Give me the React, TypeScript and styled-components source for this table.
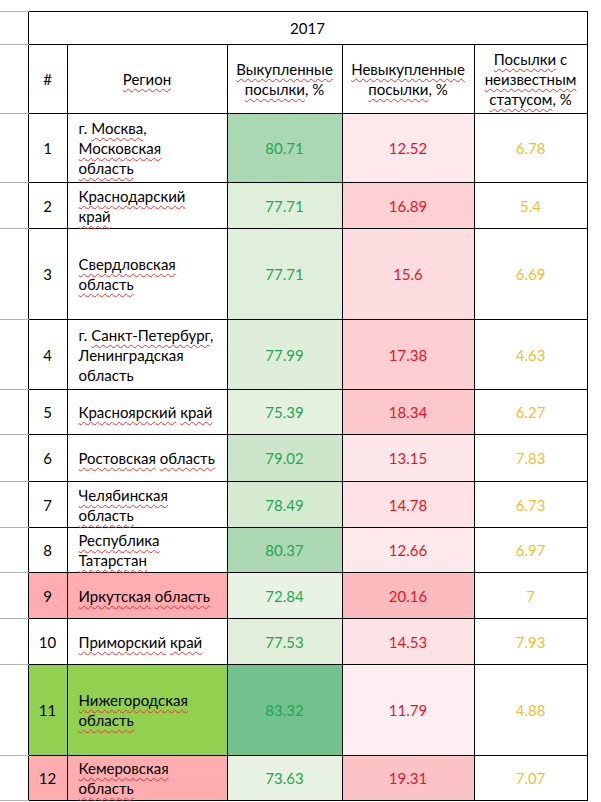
import styled, { createGlobalStyle } from "styled-components";

const GlobalStyle = createGlobalStyle`
  body {
    margin: 0;
    background: #ffffff;
    font-family: Lato, "Open Sans", sans-serif;
  }
`;

type Region = {
  n: number;
  lines: string[];
  plain?: string[];
  h: number;
  bought: number;
  boughtBg: string;
  lost: number;
  lostBg: string;
  unknown: number;
  mark?: string;
};

const rows: Region[] = [
  { n: 1, lines: ["г. Москва,", "Московская", "область"], plain: ["г."], h: 69, bought: 80.71, boughtBg: "#a9d8b2", lost: 12.52, lostBg: "#fde9ec", unknown: 6.78 },
  { n: 2, lines: ["Краснодарский", "край"], h: 46, bought: 77.71, boughtBg: "#e0efda", lost: 16.89, lostBg: "#fdd1d4", unknown: 5.4 },
  { n: 3, lines: ["Свердловская", "область"], h: 91, bought: 77.71, boughtBg: "#e0efda", lost: 15.6, lostBg: "#fddcdf", unknown: 6.69 },
  { n: 4, lines: ["г. Санкт-Петербург,", "Ленинградская", "область"], plain: ["г.", "Ленинградская", "область"], h: 70, bought: 77.99, boughtBg: "#deeed8", lost: 17.38, lostBg: "#fdcfd2", unknown: 4.63 },
  { n: 5, lines: ["Красноярский край"], h: 45, bought: 75.39, boughtBg: "#e5f1df", lost: 18.34, lostBg: "#fdc8cb", unknown: 6.27 },
  { n: 6, lines: ["Ростовская область"], h: 47, bought: 79.02, boughtBg: "#cde6cb", lost: 13.15, lostBg: "#fde7ea", unknown: 7.83 },
  { n: 7, lines: ["Челябинская", "область"], h: 46, bought: 78.49, boughtBg: "#d6eacf", lost: 14.78, lostBg: "#fde1e4", unknown: 6.73 },
  { n: 8, lines: ["Республика", "Татарстан"], h: 45, bought: 80.37, boughtBg: "#acd9b3", lost: 12.66, lostBg: "#fde9ec", unknown: 6.97 },
  { n: 9, lines: ["Иркутская область"], h: 46, bought: 72.84, boughtBg: "#e8f3e4", lost: 20.16, lostBg: "#fcbcbf", unknown: 7, mark: "#ffadb0" },
  { n: 10, lines: ["Приморский край"], h: 46, bought: 77.53, boughtBg: "#e1efda", lost: 14.53, lostBg: "#fde3e6", unknown: 7.93 },
  { n: 11, lines: ["Нижегородская", "область"], h: 91, bought: 83.32, boughtBg: "#71c28c", lost: 11.79, lostBg: "#fdeef1", unknown: 4.88, mark: "#92d050" },
  { n: 12, lines: ["Кемеровская", "область"], h: 45, bought: 73.63, boughtBg: "#e7f2e2", lost: 19.31, lostBg: "#fcc3c6", unknown: 7.07, mark: "#ffadb0" },
];

const Sheet = styled.div`
  padding-top: 11px;
`;

const Table = styled.table`
  border-collapse: collapse;
  table-layout: fixed;
  width: 587px;
  font-size: 15px;
  line-height: 20px;
  color: #000000;
`;

const Row = styled.tr<{ $h: number }>`
  height: ${(p) => p.$h}px;
`;

const Gutter = styled.td`
  padding: 0;
  border-top: 1px solid #b4b4b4;
  border-bottom: 1px solid #b4b4b4;
  border-left: none;
  border-right: none;
`;

const Cell = styled.td<{ $bg?: string; $color?: string; $left?: boolean }>`
  border: 1px solid #000000;
  padding: 0 ${(p) => (p.$left ? "4px 0 11px" : "2px")};
  text-align: ${(p) => (p.$left ? "left" : "center")};
  vertical-align: middle;
  background: ${(p) => p.$bg ?? "#ffffff"};
  color: ${(p) => p.$color ?? "#000000"};
  white-space: nowrap;
`;

const Line = styled.div``;

const Typo = styled.span`
  text-decoration: underline wavy #e8312f;
  text-decoration-thickness: 1px;
  text-underline-offset: 3px;
  text-decoration-skip-ink: none;
`;

const GREEN = "#1fa656";
const RED = "#e8141f";
const AMBER = "#f5bd30";

function Words({ text, plain = [] }: { text: string; plain?: string[] }) {
  const parts = text.split(" ");
  return (
    <>
      {parts.map((w, i) => {
        const m = w.match(/^(.*?)([,%]*)$/);
        const core = m ? m[1] : w;
        const tail = m ? m[2] : "";
        const sep = i < parts.length - 1 ? " " : "";
        if (plain.includes(core) || plain.includes(w) || /^[%с]$/.test(core)) {
          return <span key={i}>{w + sep}</span>;
        }
        return (
          <span key={i}>
            <Typo>{core}</Typo>
            {tail}
            {sep}
          </span>
        );
      })}
    </>
  );
}

export default function App() {
  return (
    <Sheet>
      <GlobalStyle />
      <Table>
        <colgroup>
          <col style={{ width: 28 }} />
          <col style={{ width: 39 }} />
          <col style={{ width: 160 }} />
          <col style={{ width: 115 }} />
          <col style={{ width: 132 }} />
          <col style={{ width: 113 }} />
        </colgroup>
        <tbody>
          <Row $h={33}>
            <Gutter />
            <Cell colSpan={5}>2017</Cell>
          </Row>
          <Row $h={69}>
            <Gutter />
            <Cell>#</Cell>
            <Cell>
              <Typo>Регион</Typo>
            </Cell>
            <Cell>
              <Line><Typo>Выкупленные</Typo></Line>
              <Line><Typo>посылки</Typo>, %</Line>
            </Cell>
            <Cell>
              <Line><Typo>Невыкупленные</Typo></Line>
              <Line><Typo>посылки</Typo>, %</Line>
            </Cell>
            <Cell>
              <Line><Typo>Посылки</Typo> с</Line>
              <Line><Typo>неизвестным</Typo></Line>
              <Line><Typo>статусом</Typo>, %</Line>
            </Cell>
          </Row>
          {rows.map((r) => (
            <Row key={r.n} $h={r.h}>
              <Gutter />
              <Cell $bg={r.mark}>{r.n}</Cell>
              <Cell $bg={r.mark} $left>
                {r.lines.map((l, i) => (
                  <Line key={i}>
                    <Words text={l} plain={r.plain} />
                  </Line>
                ))}
              </Cell>
              <Cell $bg={r.boughtBg} $color={GREEN}>{r.bought}</Cell>
              <Cell $bg={r.lostBg} $color={RED}>{r.lost}</Cell>
              <Cell $color={AMBER}>{r.unknown}</Cell>
            </Row>
          ))}
        </tbody>
      </Table>
    </Sheet>
  );
}
